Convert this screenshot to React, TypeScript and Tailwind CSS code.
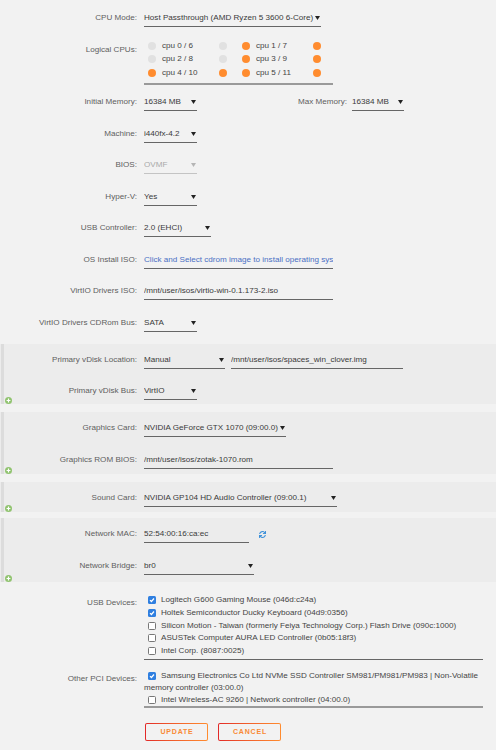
import React from "react";
import { FaSync } from "react-icons/fa";

const Arrow = ({ muted }: { muted?: boolean }) => (
  <svg width="5" height="4" viewBox="0 0 5 4" className="absolute right-[1px] top-[4px]">
    <path d="M0 0H5L2.5 4Z" fill={muted ? "#b5b5b5" : "#222"} />
  </svg>
);

function Field({
  w,
  children,
  select,
  tone = "normal",
}: {
  w: string;
  children: React.ReactNode;
  select?: boolean;
  tone?: "normal" | "muted" | "blue";
}) {
  const color =
    tone === "muted"
      ? "border-[#c4c4c4] text-[#a9a9a9]"
      : tone === "blue"
      ? "border-[#666666] text-[#4a70c4]"
      : "border-[#666666] text-[#3a3a3a]";
  return (
    <div
      className={`relative mt-[10px] h-[15px] shrink-0 overflow-hidden whitespace-nowrap border-b leading-[12px] ${w} ${color}`}
    >
      {children}
      {select && <Arrow muted={tone === "muted"} />}
    </div>
  );
}

function Row({
  label,
  children,
  h = "h-[31.5px]",
}: {
  label: string;
  children: React.ReactNode;
  h?: string;
}) {
  return (
    <div className={`flex ${h}`}>
      <div className="w-[138px] shrink-0 pr-[1px] pt-[10px] text-right leading-[12px] text-[#5e5e5e]">
        {label}
      </div>
      <div className="ml-[6px] flex items-start">{children}</div>
    </div>
  );
}

const Plus = () => (
  <svg width="7" height="7" viewBox="0 0 7 7" className="absolute bottom-0 left-[5px]">
    <circle cx="3.5" cy="3.5" r="3.5" fill="#90c36f" />
    <path d="M3.5 1.6V5.4M1.6 3.5H5.4" stroke="#fff" strokeWidth="1.2" />
  </svg>
);

function Section({ h, mt, children }: { h: string; mt: string; children: React.ReactNode }) {
  return (
    <div
      className={`relative bg-[#ececec] ${h} ${mt} before:absolute before:bottom-0 before:left-[1px] before:top-0 before:w-[3px] before:bg-[#dcdcdc] before:content-['']`}
    >
      {children}
      <Plus />
    </div>
  );
}

const Dot = ({ on }: { on: boolean }) => (
  <span className={`inline-block h-[8px] w-[8px] shrink-0 rounded-full ${on ? "bg-[#ff8c2f]" : "bg-[#e1e1e1]"}`} />
);

const Check = ({ on }: { on: boolean }) =>
  on ? (
    <span className="inline-flex h-[8px] w-[8px] shrink-0 items-center justify-center rounded-[1.5px] bg-[#2f7fe0] align-middle">
      <svg width="6" height="6" viewBox="0 0 6 6">
        <path d="M1 3.1L2.4 4.5L5 1.5" stroke="#fff" strokeWidth="1.2" fill="none" />
      </svg>
    </span>
  ) : (
    <span className="inline-block h-[8px] w-[8px] shrink-0 rounded-[1.5px] border border-[#777777] bg-white align-middle" />
  );

const cpuRows: [string, boolean, boolean, string, boolean, boolean][] = [
  ["cpu 0 / 6", false, false, "cpu 1 / 7", true, true],
  ["cpu 2 / 8", false, false, "cpu 3 / 9", true, true],
  ["cpu 4 / 10", true, true, "cpu 5 / 11", true, true],
];

const usb: [string, boolean][] = [
  ["Logitech G600 Gaming Mouse (046d:c24a)", true],
  ["Holtek Semiconductor Ducky Keyboard (04d9:0356)", true],
  ["Silicon Motion - Taiwan (formerly Feiya Technology Corp.) Flash Drive (090c:1000)", false],
  ["ASUSTek Computer AURA LED Controller (0b05:18f3)", false],
  ["Intel Corp. (8087:0025)", false],
];

function Button({ children }: { children: React.ReactNode }) {
  return (
    <div className="h-[18px] w-[63px] rounded-[2px] bg-linear-to-r from-[#e22828] to-[#ff8c2f] p-[1px]">
      <div className="flex h-full w-full items-center justify-center rounded-[1px] bg-[#f2f2f2] pl-[1px] text-[7px] font-bold tracking-[0.8px] text-[#f98a35]">
        {children}
      </div>
    </div>
  );
}

export default function App() {
  return (
    <div className="min-h-[750px] w-[496px] overflow-hidden bg-[#f2f2f2] pt-[2px] font-['Liberation_Sans',Arial,sans-serif] text-[8.1px]">
      <Row label="CPU Mode:" h="h-[32px]">
        <Field w="w-[177px]" select>
          Host Passthrough (AMD Ryzen 5 3600 6-Core)
        </Field>
      </Row>

      <div className="flex h-[52px]">
        <div className="w-[138px] shrink-0 pr-[1px] pt-[10px] text-right leading-[12px] text-[#5e5e5e]">
          Logical CPUs:
        </div>
        <div className="ml-[6px] h-[51px] w-[189px] border-b-2 border-[#9a9a9a] pt-[5px]">
          {cpuRows.map((r, i) => (
            <div key={i} className="flex h-[13.5px] items-center text-[#444]">
              <span className="ml-[4px]" />
              <Dot on={r[1]} />
              <span className="ml-[6px] w-[57px] leading-[12px]">{r[0]}</span>
              <Dot on={r[2]} />
              <span className="ml-[15px]" />
              <Dot on={r[4]} />
              <span className="ml-[6px] w-[57px] leading-[12px]">{r[3]}</span>
              <Dot on={r[5]} />
            </div>
          ))}
        </div>
      </div>

      <div className="flex h-[31.5px]">
        <div className="w-[138px] shrink-0 pr-[1px] pt-[10px] text-right leading-[12px] text-[#5e5e5e]">
          Initial Memory:
        </div>
        <div className="ml-[6px] flex items-start">
          <Field w="w-[53px]" select>
            16384 MB
          </Field>
          <div className="w-[150px] shrink-0 pt-[10px] text-right leading-[12px] text-[#5e5e5e]">
            Max Memory:
          </div>
          <div className="ml-[5px]">
            <Field w="w-[52px]" select>
              16384 MB
            </Field>
          </div>
        </div>
      </div>

      <Row label="Machine:">
        <Field w="w-[53px]" select>
          i440fx-4.2
        </Field>
      </Row>
      <Row label="BIOS:">
        <Field w="w-[53px]" select tone="muted">
          OVMF
        </Field>
      </Row>
      <Row label="Hyper-V:">
        <Field w="w-[53px]" select>
          Yes
        </Field>
      </Row>
      <Row label="USB Controller:">
        <Field w="w-[67px]" select>
          2.0 (EHCI)
        </Field>
      </Row>
      <Row label="OS Install ISO:">
        <Field w="w-[189px]" tone="blue">
          Click and Select cdrom image to install operating system
        </Field>
      </Row>
      <Row label="VirtIO Drivers ISO:">
        <Field w="w-[189px]">/mnt/user/isos/virtio-win-0.1.173-2.iso</Field>
      </Row>
      <Row label="VirtIO Drivers CDRom Bus:">
        <Field w="w-[53px]" select>
          SATA
        </Field>
      </Row>

      <Section h="h-[60px]" mt="mt-[6px]">
        <Row label="Primary vDisk Location:" h="h-[31px]">
          <Field w="w-[81px]" select>
            Manual
          </Field>
          <div className="ml-[6px]">
            <Field w="w-[172px]">/mnt/user/isos/spaces_win_clover.img</Field>
          </div>
        </Row>
        <Row label="Primary vDisk Bus:" h="h-[29px]">
          <Field w="w-[53px]" select>
            VirtIO
          </Field>
        </Row>
      </Section>

      <Section h="h-[62px]" mt="mt-[8px]">
        <Row label="Graphics Card:" h="h-[32px]">
          <Field w="w-[142px]" select>
            NVIDIA GeForce GTX 1070 (09:00.0)
          </Field>
        </Row>
        <Row label="Graphics ROM BIOS:" h="h-[30px]">
          <Field w="w-[189px]">/mnt/user/isos/zotak-1070.rom</Field>
        </Row>
      </Section>

      <Section h="h-[30px]" mt="mt-[8px]">
        <Row label="Sound Card:" h="h-[30px]">
          <Field w="w-[193px]" select>
            NVIDIA GP104 HD Audio Controller (09:00.1)
          </Field>
        </Row>
      </Section>

      <Section h="h-[64px]" mt="mt-[6px]">
        <Row label="Network MAC:" h="h-[32px]">
          <Field w="w-[105px]">52:54:00:16:ca:ec</Field>
          <FaSync className="ml-[10px] mt-[13px] h-[7px] w-[7px] text-[#3a8fd9]" />
        </Row>
        <Row label="Network Bridge:" h="h-[32px]">
          <Field w="w-[110px]" select>
            br0
          </Field>
        </Row>
      </Section>

      <div className="mt-[12px] flex">
        <div className="w-[138px] shrink-0 pr-[1px] pt-[3px] text-right leading-[12px] text-[#5e5e5e]">
          USB Devices:
        </div>
        <div className="ml-[6px] w-[339px] border-b border-[#666666] pb-[1.5px]">
          {usb.map(([t, on], i) => (
            <div key={i} className="flex h-[12.7px] items-center whitespace-nowrap text-[#444]">
              <span className="ml-[4px]" />
              <Check on={on} />
              <span className="ml-[5px] leading-[12px]">{t}</span>
            </div>
          ))}
        </div>
      </div>

      <div className="mt-[10px] flex">
        <div className="w-[138px] shrink-0 pr-[1px] pt-[3px] text-right leading-[12px] text-[#5e5e5e]">
          Other PCI Devices:
        </div>
        <div className="ml-[6px] w-[339px] whitespace-nowrap border-b-2 border-[#9a9a9a] leading-[12px] text-[#444]">
          <div>
            <span className="ml-[4px]" />
            <Check on={true} />
            <span className="ml-[5px]">
              Samsung Electronics Co Ltd NVMe SSD Controller SM981/PM981/PM983 | Non-Volatile
            </span>
            <br />
            memory controller (03:00.0)
          </div>
          <div>
            <span className="ml-[4px]" />
            <Check on={false} />
            <span className="ml-[5px]">Intel Wireless-AC 9260 | Network controller (04:00.0)</span>
          </div>
        </div>
      </div>

      <div className="ml-[145px] mt-[15px] flex gap-[10px]">
        <Button>UPDATE</Button>
        <Button>CANCEL</Button>
      </div>
    </div>
  );
}
